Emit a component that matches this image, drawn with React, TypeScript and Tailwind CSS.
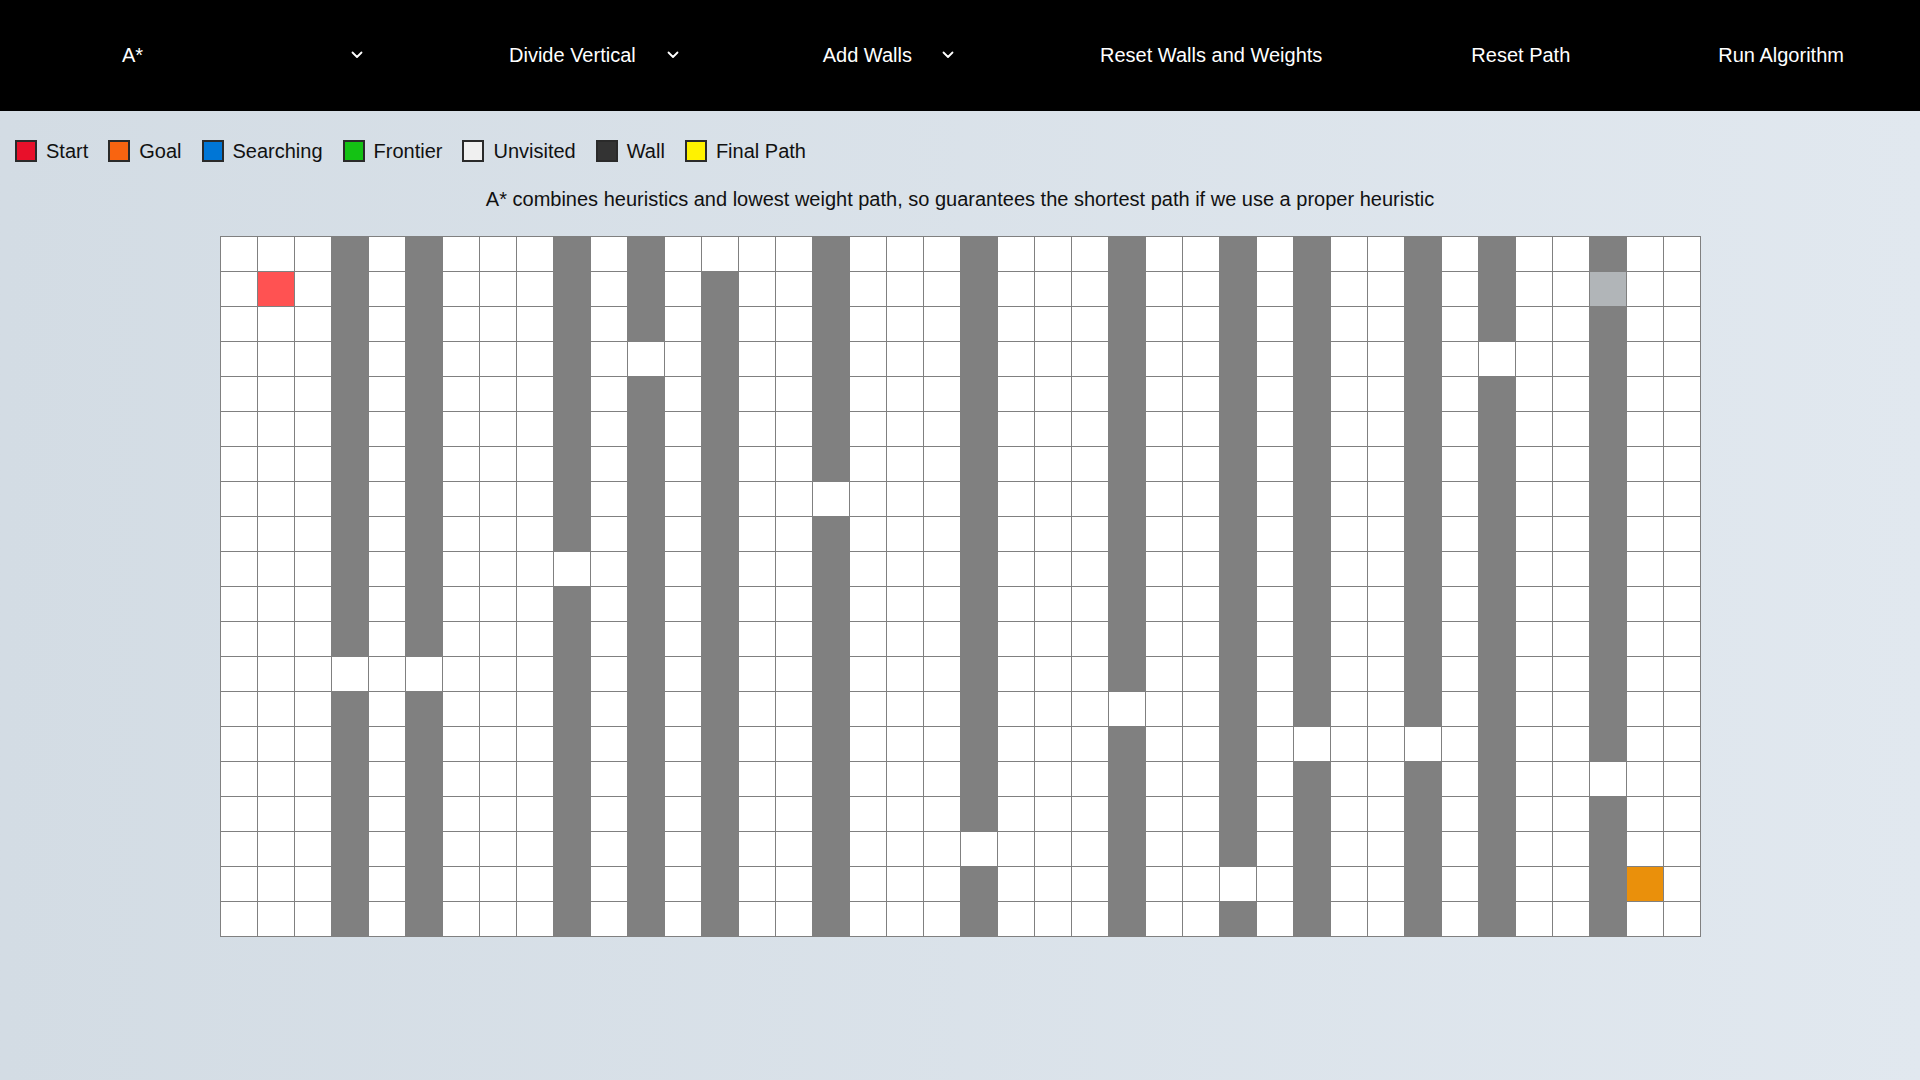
import React from "react";

const COLS = 40;
const ROWS = 20;

// column -> gap row
const WALLS: Record<number, number> = {
  3: 12,
  5: 12,
  9: 9,
  11: 3,
  13: 0,
  16: 7,
  20: 17,
  24: 13,
  27: 18,
  29: 14,
  32: 14,
  34: 3,
  37: 15,
};

function cellClass(r: number, c: number): string {
  if (r === 1 && c === 1) return "bg-[#ff5252] border-[#808080]";
  if (r === 18 && c === 38) return "bg-[#ea900b] border-[#808080]";
  if (r === 1 && c === 37) return "bg-[#b1b5b8] border-[#808080]";
  if (c in WALLS && WALLS[c] !== r) return "bg-[#808080] border-[#808080]";
  return "bg-white border-[#808080]";
}

function Chevron() {
  return (
    <svg width="12" height="8" viewBox="0 0 12 8" fill="none">
      <polyline points="1.5,1.5 6,6 10.5,1.5" stroke="white" strokeWidth="1.8" strokeLinecap="round" strokeLinejoin="round" />
    </svg>
  );
}

const legend = [
  { label: "Start", color: "bg-[#e8102a]" },
  { label: "Goal", color: "bg-[#f96410]" },
  { label: "Searching", color: "bg-[#0076d6]" },
  { label: "Frontier", color: "bg-[#14c214]" },
  { label: "Unvisited", color: "bg-[#f0f0f0]" },
  { label: "Wall", color: "bg-[#333333]" },
  { label: "Final Path", color: "bg-[#fff200]" },
];

export default function App() {
  const rows = [];
  for (let r = 0; r < ROWS; r++) {
    const cells = [];
    for (let c = 0; c < COLS; c++) {
      cells.push(
        <div key={c} className={"w-[37px] h-[35px] border-r border-b " + cellClass(r, c)} />
      );
    }
    rows.push(
      <div key={r} className="flex">
        {cells}
      </div>
    );
  }

  return (
    <div className="min-h-[1080px] w-[1920px] bg-gradient-to-r from-[#d3dce4] to-[#e1e8ef] font-['Liberation_Sans',Arial,sans-serif]">
      <header className="h-[111px] bg-black flex items-center pl-[122px] pb-[2px] text-white text-[20px]">
        <div className="w-[243px] flex items-center justify-between pr-[2px]">
          <span>A*</span>
          <Chevron />
        </div>
        <div className="ml-[144px] flex items-center">
          <span>Divide Vertical</span>
          <span className="ml-[31px] flex"><Chevron /></span>
        </div>
        <div className="ml-[144px] flex items-center">
          <span>Add Walls</span>
          <span className="ml-[30px] flex"><Chevron /></span>
        </div>
        <div className="ml-[146px]">Reset Walls and Weights</div>
        <div className="ml-[149px]">Reset Path</div>
        <div className="ml-[148px]">Run Algorithm</div>
      </header>

      <div className="mt-[29px] pl-[15px] flex items-center text-[20px] text-[#111]">
        {legend.map((l) => (
          <div key={l.label} className="flex items-center mr-[20px]">
            <div className={"w-[22px] h-[22px] border-2 border-[#2a2a2a] " + l.color} />
            <span className="ml-[9px] leading-[22px]">{l.label}</span>
          </div>
        ))}
      </div>

      <p className="mt-[25px] text-center text-[20px] leading-[24px] text-[#111]">
        A* combines heuristics and lowest weight path, so guarantees the shortest path if we use a proper heuristic
      </p>

      <div className="mt-[25px] flex justify-center">
        <div className="border-t border-l border-[#808080]">{rows}</div>
      </div>
    </div>
  );
}
